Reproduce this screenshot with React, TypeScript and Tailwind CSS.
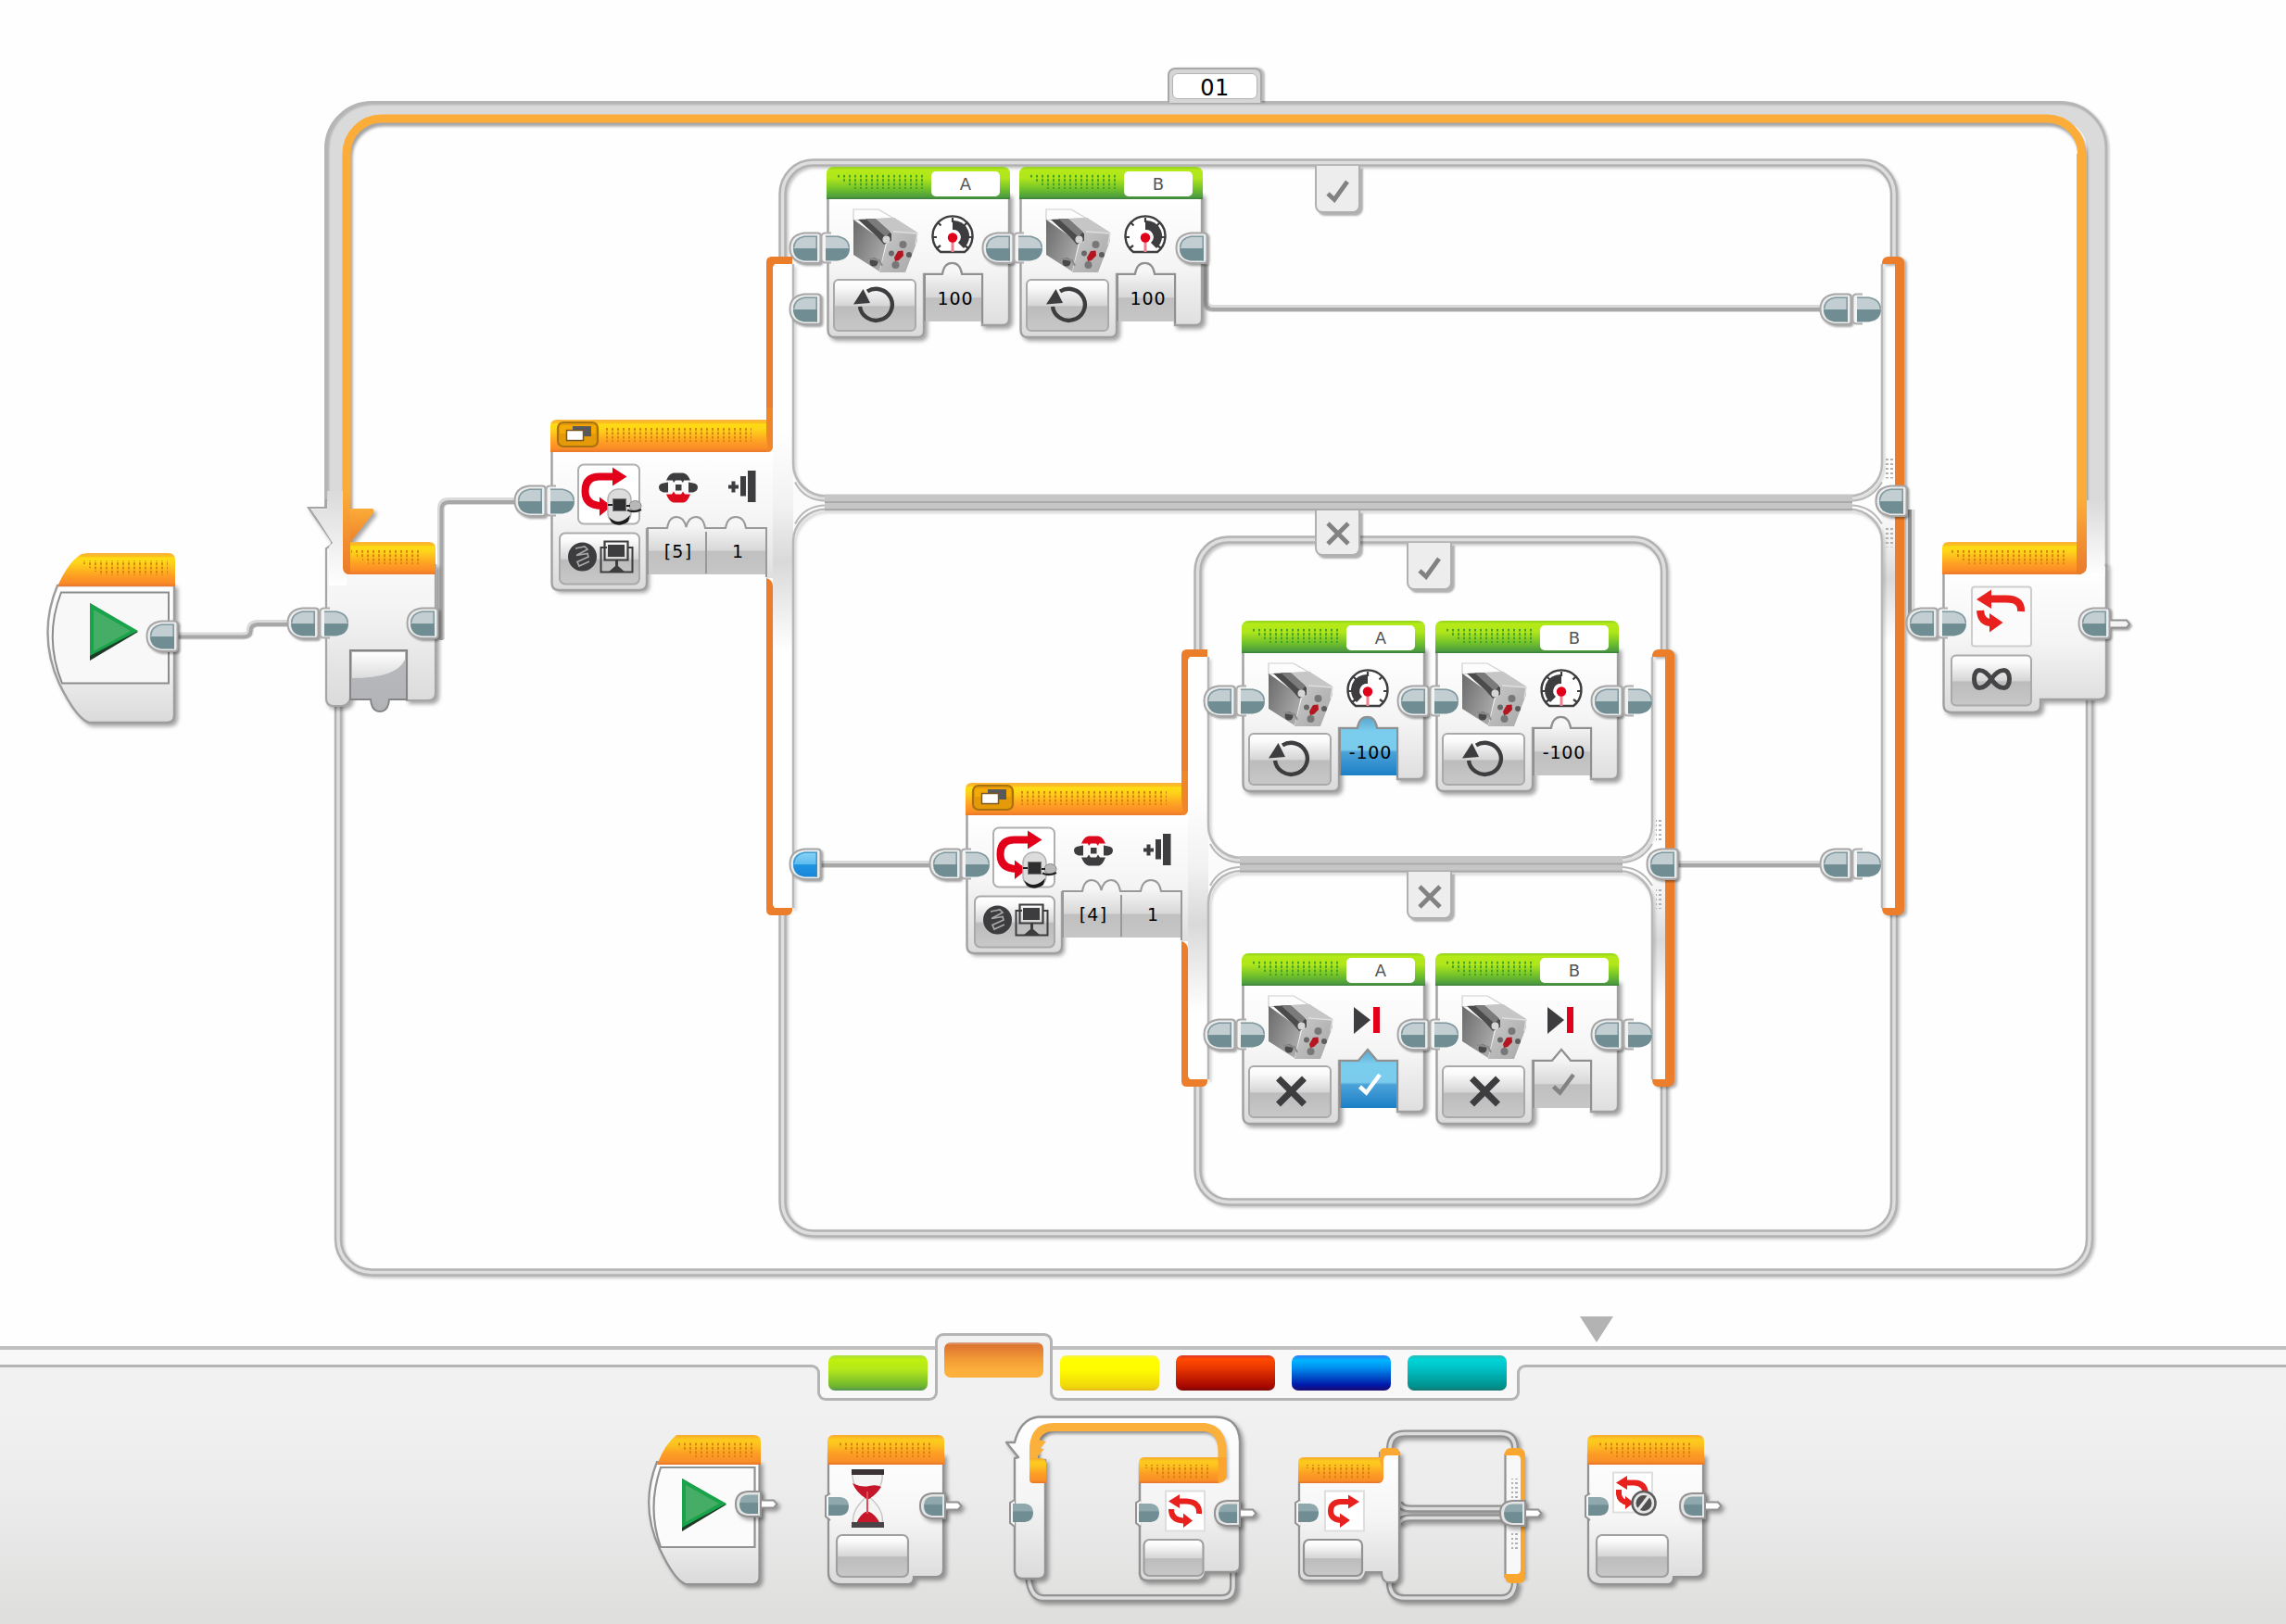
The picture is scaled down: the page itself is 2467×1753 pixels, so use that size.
import React from 'react';

type Pt = { x: number; y: number };

const SHADOW = 'drop-shadow(3px 3px 2px rgba(0,0,0,0.35))';

function Defs() {
  return (
    <svg className="absolute h-0 w-0" aria-hidden="true">
      <defs>
        <linearGradient id="orangeHead" x1="0" y1="0" x2="0" y2="1">
          <stop offset="0" stopColor="#fcb040" />
          <stop offset="0.1" stopColor="#fbc01c" />
          <stop offset="0.14" stopColor="#fddc14" />
          <stop offset="0.3" stopColor="#fdd31a" />
          <stop offset="0.7" stopColor="#fe9c24" />
          <stop offset="0.88" stopColor="#fb8d26" />
          <stop offset="1" stopColor="#e9782c" />
        </linearGradient>
        <linearGradient id="orangeTile" x1="0" y1="0" x2="0" y2="1">
          <stop offset="0" stopColor="#faa92e" />
          <stop offset="0.15" stopColor="#fccb1e" />
          <stop offset="0.3" stopColor="#fcc41f" />
          <stop offset="0.65" stopColor="#fd9c25" />
          <stop offset="0.9" stopColor="#f98f27" />
          <stop offset="1" stopColor="#e5722a" />
        </linearGradient>
        <linearGradient id="greenHead" x1="0" y1="0" x2="0" y2="1">
          <stop offset="0" stopColor="#8fd01f" />
          <stop offset="0.1" stopColor="#b4ea17" />
          <stop offset="0.35" stopColor="#b0e61b" />
          <stop offset="0.7" stopColor="#70c02c" />
          <stop offset="0.93" stopColor="#4d9c3f" />
          <stop offset="1" stopColor="#3c7c38" />
        </linearGradient>
        <linearGradient id="body" x1="0" y1="0" x2="0" y2="1">
          <stop offset="0" stopColor="#ffffff" />
          <stop offset="0.5" stopColor="#f5f5f5" />
          <stop offset="1" stopColor="#dadada" />
        </linearGradient>
        <linearGradient id="btn" x1="0" y1="0" x2="0" y2="1">
          <stop offset="0" stopColor="#ffffff" />
          <stop offset="0.15" stopColor="#fafafa" />
          <stop offset="0.5" stopColor="#d6d6d6" />
          <stop offset="0.53" stopColor="#bcbcbc" />
          <stop offset="1" stopColor="#c8c8c8" />
        </linearGradient>
        <linearGradient id="param" x1="0" y1="0" x2="0" y2="1">
          <stop offset="0.15" stopColor="#f6f6f6" />
          <stop offset="0.58" stopColor="#d8d8d8" />
          <stop offset="0.6" stopColor="#c0c0c0" />
          <stop offset="1" stopColor="#c6c6c6" />
        </linearGradient>
        <linearGradient id="paramBlue" x1="0" y1="0" x2="0" y2="1">
          <stop offset="0" stopColor="#5aa6cc" />
          <stop offset="0.25" stopColor="#7bcdee" />
          <stop offset="0.56" stopColor="#7acbec" />
          <stop offset="0.6" stopColor="#4ba2d8" />
          <stop offset="1" stopColor="#1c80c6" />
        </linearGradient>
        <linearGradient id="pill" x1="0" y1="0" x2="0" y2="1">
          <stop offset="0" stopColor="#c3ced3" />
          <stop offset="0.5" stopColor="#c3ced3" />
          <stop offset="0.52" stopColor="#6f8d92" />
          <stop offset="1" stopColor="#6f8d92" />
        </linearGradient>
        <linearGradient id="pillDark" x1="0" y1="0" x2="0" y2="1">
          <stop offset="0" stopColor="#8fa8ad" />
          <stop offset="0.38" stopColor="#8fa8ad" />
          <stop offset="0.45" stopColor="#6f8d92" />
          <stop offset="1" stopColor="#6f8d92" />
        </linearGradient>
        <linearGradient id="pillBlue" x1="0" y1="0" x2="0" y2="1">
          <stop offset="0" stopColor="#8ad4f5" />
          <stop offset="0.5" stopColor="#5cbcf0" />
          <stop offset="0.52" stopColor="#1f94e0" />
          <stop offset="1" stopColor="#1a86d8" />
        </linearGradient>
        <linearGradient id="column" x1="0" y1="0" x2="0" y2="1">
          <stop offset="0" stopColor="#ffffff" />
          <stop offset="0.34" stopColor="#f2f2f2" />
          <stop offset="0.6" stopColor="#d9d9d9" />
          <stop offset="1" stopColor="#ffffff" />
        </linearGradient>
        <linearGradient id="railFade" x1="0" y1="0" x2="0" y2="1">
          <stop offset="0" stopColor="#dadada" />
          <stop offset="1" stopColor="#ffffff" />
        </linearGradient>
        <linearGradient id="railOrange" x1="0" y1="0" x2="0" y2="1">
          <stop offset="0" stopColor="#fcac38" />
          <stop offset="1" stopColor="#ea7a2c" />
        </linearGradient>
        <linearGradient id="socket" x1="0" y1="0" x2="0" y2="1">
          <stop offset="0" stopColor="#b9babd" />
          <stop offset="1" stopColor="#b2b3b7" />
        </linearGradient>
        <linearGradient id="gloss" x1="0" y1="0" x2="0" y2="1">
          <stop offset="0" stopColor="#ffffff" />
          <stop offset="1" stopColor="#dcdcde" />
        </linearGradient>
        <linearGradient id="motorSide" x1="0" y1="0" x2="1" y2="0.6">
          <stop offset="0" stopColor="#6a6a6a" />
          <stop offset="1" stopColor="#a9a9a9" />
        </linearGradient>
        <linearGradient id="motorFront" x1="0" y1="0" x2="1" y2="1">
          <stop offset="0" stopColor="#cfcfcf" />
          <stop offset="1" stopColor="#a8a8a8" />
        </linearGradient>
        <pattern id="dotsOrange" width="6" height="4.4" patternUnits="userSpaceOnUse">
          <rect width="2" height="2.8" fill="#d8840f" />
        </pattern>
        <pattern id="dotsGreen" width="6" height="4.4" patternUnits="userSpaceOnUse">
          <rect width="2" height="2.8" fill="#45a423" />
        </pattern>
        <pattern id="dotsGray" width="5" height="5" patternUnits="userSpaceOnUse">
          <rect width="3" height="2" fill="#b2b2b2" />
        </pattern>
      </defs>
    </svg>
  );
}

function dotField(x1: number, y: number, x2: number) {
  return `M${x1} ${y}H${x2}V${y + 16}H${x1 + 18}V${y + 12}H${x1 + 12}V${y + 8}H${x1 + 6}V${y + 4}H${x1}Z`;
}

/* ---------- connectors ---------- */

function Out({ x, y, fill = 'url(#pill)', tail = false }: Pt & { fill?: string; tail?: boolean }) {
  return (
    <g transform={`translate(${x - 1} ${y - 0.5})`}>
      <g style={{ filter: 'drop-shadow(2px 2px 1px rgba(0,0,0,0.35))' }}>
        {tail && <path d="M32 14H53L56 18L53 22H32" fill="#f4f4f4" stroke="#8f8f8f" strokeWidth="2" />}
        <path d="M17 1H31Q34.500 1 34.500 4V30Q34.500 33.500 31 33.500H17Q1.500 31 1.500 17.200Q1.500 3 17 1Z" fill="#ececec" stroke="#a6a6a6" strokeWidth="2" />
      </g>
      <path d="M17 4H31V31H17Q5 29 5 17.500Q5 6 17 4Z" fill={fill} />
      <path d="M30.200 31V4.800H17Q6 7 5.600 17" fill="none" stroke={fill === 'url(#pill)' ? '#6f8d92' : '#2f8fc8'} strokeWidth="1.600" opacity="0.8" />
    </g>
  );
}

function In({ x, y }: Pt) {
  return (
    <g transform={`translate(${x - 1} ${y - 0.5})`}>
      <path d="M7 1H1Q-3.500 1 -3.500 5V29Q-3.500 33 1 33H7" fill="#f3f3f3" stroke="#adadad" strokeWidth="2" />
      <path d="M1 4H14Q27 6 27 17.500Q27 29 14 31H1Z" fill="url(#pill)" />
      <path d="M1 4.800H14Q26 7 26.300 17" fill="none" stroke="#6f8d92" strokeWidth="1.400" opacity="0.8" />
    </g>
  );
}

/* ---------- icons ---------- */

function Motor() {
  return (
    <g>
      <path d="M29 46H56L73 56L70 62L38 57L29 58Z" fill="#fdfdfd" stroke="#cfcfcf" strokeWidth="1.200" />
      <path d="M29 57L64 82L57 113L29 95Z" fill="url(#motorSide)" />
      <path d="M34 57L54 56L70 72V80L62 84L55 76Z" fill="#4b4b4b" />
      <path d="M42 56H53L69 70L64 76Z" fill="#7b7b7b" />
      <path d="M53 56L73 55L98 71V80L85 114H57L65 83L70 80V71Z" fill="url(#motorFront)" />
      <path d="M53 56L73 55L98 71L72 70Z" fill="#c6c6c6" />
      <path d="M72 70L98 72L96 84" fill="none" stroke="#dedede" strokeWidth="1.500" />
      <circle cx="64.500" cy="78.500" r="4" fill="#d6d6d6" />
      <circle cx="51" cy="103" r="4.500" fill="#4a4a4a" />
      <path d="M45 99L57 101L60 107" fill="none" stroke="#8b8b8b" strokeWidth="2" />
      <circle cx="82.500" cy="84" r="4" fill="#777" />
      <circle cx="70" cy="93.500" r="3" fill="#686868" />
      <circle cx="89" cy="95" r="3" fill="#5d5d5d" />
      <circle cx="74.500" cy="106" r="4" fill="#777" />
      <path d="M73 98L77 91L82.500 90.500L83 96L78 101L74 102Z" fill="#b31620" />
    </g>
  );
}

function Gauge({ mirrored = false }: { mirrored?: boolean }) {
  return (
    <g transform={mirrored ? 'translate(272 0) scale(-1 1)' : undefined}>
      <path d="M123 92A21.500 21.500 0 1 1 149 92Z" fill="#fff" stroke="#3d3d3f" strokeWidth="2.400" strokeLinejoin="round" />
      <path d="M136 58A17 17 0 0 1 148 88L142 82A8 8 0 0 0 136 68Z" fill="#3d3d3f" />
      <path d="M136 55V60M120 60L123.500 63.500M115 76H119M119 88L123 85M152 60L148.500 63.500M157 76H153M153 88L149 85" stroke="#3d3d3f" strokeWidth="2.200" />
      <rect x="134.500" y="77" width="3" height="15" fill="#f0808e" />
      <circle cx="136" cy="76.500" r="5.200" fill="#e2001a" />
    </g>
  );
}

function Rotate() {
  return (
    <g>
      <path d="M44 134.500A17.500 17 0 1 1 36 151" fill="none" stroke="#3d3d3f" strokeWidth="4.400" />
      <path d="M29 148.500L39.500 132L47 147Z" fill="#3d3d3f" />
    </g>
  );
}

/* ---------- motor block ---------- */

type MotorProps = Pt & { port: string; value?: string; blue?: boolean; mode: 'on' | 'off'; mirrored?: boolean };

function MotorBlock({ x, y, port, value, blue, mode, mirrored }: MotorProps) {
  const top = mode === 'on' ? 'H125Q127 104 135.500 104Q144 104 146 116H168' : 'H126L136 104L146 116H168';
  return (
    <div className="absolute h-[188px] w-[199px]" style={{ left: x, top: y }}>
      <svg className="absolute inset-0 overflow-visible" width="199" height="188" viewBox="0 0 199 188">
        <path
          d={`M1.500 30H197V164Q197 171 190 171H168V116${mode === 'on' ? 'H146Q144 104 135.500 104Q127 104 125 116' : 'H146L136 104L126 116'}H105V177Q105 184 98 184H9Q1.500 184 1.500 176Z`}
          fill="url(#body)" stroke="#a0a0a0" strokeWidth="2.400" style={{ filter: SHADOW }}
        />
        <path d={`M106 167V116${top}V167Z`} fill={blue ? 'url(#paramBlue)' : 'url(#param)'} />
        <path d={`M106 167V116${top}V169`} fill="none" stroke="#909090" strokeWidth="2" />
        <path d="M0 35V8Q0 0 8 0H190Q198 0 198 8V35Z" fill="url(#greenHead)" />
        <path d={dotField(9, 8, 107)} fill="url(#dotsGreen)" />
        <rect x="8" y="122" width="88" height="55" rx="5" fill="url(#btn)" stroke="#a9a9a9" strokeWidth="2" />
        <Motor />
        {mode === 'on' ? (
          <>
            <Gauge mirrored={mirrored} />
            <Rotate />
          </>
        ) : (
          <>
            <path d="M121 58L139 72L121 87Z" fill="#3d3d3f" />
            <rect x="142" y="58" width="7" height="28" fill="#e2001a" />
            <path d="M39.500 135L67.500 163M67.500 135L39.500 163" stroke="#3d3d3f" strokeWidth="7" />
            <path d="M127.500 144L134.500 150.500L149 131" fill="none" stroke={blue ? '#fff' : '#828282'} strokeWidth="4.500" />
          </>
        )}
      </svg>
      <div className="absolute top-[5px] left-[113px] flex h-[27px] w-[74px] items-center justify-center rounded-[5px] bg-white font-['DejaVu_Sans',sans-serif] text-[18px] leading-none text-[#555]">
        {port}
      </div>
      {value && (
        <div className="absolute top-[131px] left-[99px] flex h-[22px] w-[80px] items-center justify-center font-['DejaVu_Sans',sans-serif] text-[19px] leading-none tracking-[0.9px] text-black">
          {value}
        </div>
      )}
    </div>
  );
}

/* ---------- switch block ---------- */

function SwitchHead({ x, y, value, redTop }: Pt & { value: string; redTop?: boolean }) {
  const topFill = redTop ? '#dd0a1e' : '#3d3d3f';
  const bottomFill = redTop ? '#3d3d3f' : '#dd0a1e';
  return (
    <div className="absolute h-[188px] w-[264px]" style={{ left: x, top: y }}>
      <svg className="absolute inset-0 overflow-visible" width="264" height="188" viewBox="594 453 264 188">
        <path d="M596 560H698V629Q698 637 690 637H603Q596 637 596 629Z" fill="#e4e4e4" style={{ filter: SHADOW }} />
        <path d="M595.500 484H834V624H827V570H698V629Q698 637 690 637H603Q595.500 637 595.500 629Z" fill="url(#body)" />
        <path d="M595.500 486V629Q595.500 637 603 637H690Q698 637 698 629V570" fill="none" stroke="#a0a0a0" strokeWidth="2.400" />
        <path d="M699 620V570H720Q722 558 730 558Q738 558 740.500 569Q743 558 751 558Q759 558 761 570H783Q785 558 794 558Q803 558 805 570H827V620Z" fill="url(#param)" />
        <path d="M699 620V570H720Q722 558 730 558Q738 558 740.500 569Q743 558 751 558Q759 558 761 570H783Q785 558 794 558Q803 558 805 570H827V623M762 574V619" fill="none" stroke="#999" strokeWidth="2" />
        <path d="M594 488V460Q594 453 601 453H834V481Q834 488 827 488Z" fill="url(#orangeHead)" />
        <path d="M827 440H834V481Q834 488 829 488L827 470Z" fill="#f08628" />
        <rect x="653" y="461" width="158" height="16" fill="url(#dotsOrange)" />
        <rect x="602" y="456" width="43" height="26" rx="6" fill="#e59a0a" stroke="#a97210" strokeWidth="2.200" />
        <path d="M604 459H643V468H604Z" fill="#fdb400" opacity="0.6" />
        <rect x="618" y="460" width="20" height="11" fill="#58595b" />
        <rect x="611.500" y="464.500" width="18" height="11" fill="#fff" stroke="#7a5a20" strokeWidth="1.500" />
        <rect x="624" y="501.500" width="66" height="64" rx="6" fill="#fff" stroke="#b0b0b0" strokeWidth="2" />
        <path d="M662 514.500H647Q631.500 514.500 631.500 530T649 546" fill="none" stroke="#e2001a" strokeWidth="8" />
        <path d="M661 504.500L676.500 514.500L661 524.500ZM647 536.500L660 546.500L647 557Z" fill="#e2001a" />
        <rect x="656" y="528" width="25" height="37" rx="11" fill="#dcdcdc" stroke="#b4b4b4" strokeWidth="1.500" />
        <path d="M657 558Q668 569 680 556L678 563Q668 570 660 564Z" fill="#1c1c1c" />
        <ellipse cx="685.500" cy="546" rx="6.500" ry="5.500" fill="#b8b8b8" stroke="#8a8a8a" strokeWidth="1" />
        <path d="M677 550.500Q684 554 692 550" fill="none" stroke="#222" strokeWidth="2.200" />
        <rect x="661.500" y="538.500" width="14" height="13" fill="#2f2f31" stroke="#777" strokeWidth="1" />
        <path d="M656 545H661M676 546H680" stroke="#222" strokeWidth="2" />
        <path d="M719 518.500Q722 511 727 510.500H737Q742 511 745 518.500H738L737 521L735 518.500H729L727 521L726 518.500Z" fill={topFill} />
        <path d="M719 533.500H725L727 530.500L729 533.500H735L737 530.500L739 533.500H745Q742 541.500 738 542.500H727Q722 541.500 719 533.500Z" fill={bottomFill} />
        <path d="M721 520.500V531.500H716Q711 530 711 526T716 521.500ZM743 520.500V531.500H748Q753 530 753 526T748 521.500Z" fill="#3d3d3f" />
        <rect x="729" y="523" width="6.500" height="6.500" fill="#3d3d3f" />
        <path d="M786 525.500H797M791.500 519.500V531.500" stroke="#3d3d3f" strokeWidth="4" />
        <rect x="799" y="514" width="6" height="21.500" fill="#3d3d3f" />
        <rect x="807" y="508" width="8.500" height="34" fill="#3d3d3f" />
        <rect x="604" y="575.500" width="86" height="55" rx="6" fill="url(#btn)" stroke="#a9a9a9" strokeWidth="2" />
        <circle cx="628.500" cy="601" r="15.500" fill="#3d3d3f" />
        <path d="M621 592L631 590L634 593L622 599.500M622 599.500L634 597.500L635 601L623 606.500L625 611L636 606" fill="none" stroke="#a8a8a8" strokeWidth="1.700" />
        <path d="M655 591H648.500V617.500H682.500V591H677" fill="none" stroke="#3d3d3f" strokeWidth="2" />
        <path d="M652.500 584.500H677.500V604.500H652.500Z" fill="none" stroke="#3d3d3f" strokeWidth="2.200" />
        <rect x="656" y="588" width="18" height="13" fill="#3d3d3f" />
        <path d="M664 604H667V611L674 617H657L664 611Z" fill="#3d3d3f" />
      </svg>
      <div className="absolute top-[131px] left-[106px] flex h-[22px] w-[64px] items-center justify-center font-['DejaVu_Sans',sans-serif] text-[19px] leading-none tracking-[1.2px] text-black">
        [{value}]
      </div>
      <div className="absolute top-[131px] left-[170px] flex h-[22px] w-[64px] items-center justify-center font-['DejaVu_Sans',sans-serif] text-[19px] leading-none text-black">
        1
      </div>
    </div>
  );
}

/* ---------- frames and wires ---------- */

function Rail({ d }: { d: string }) {
  return (
    <g fill="none" style={{ filter: 'drop-shadow(2px 2px 1.5px rgba(0,0,0,0.22))' }}>
      <path d={d} stroke="#b2b2b2" strokeWidth="8.500" />
      <path d={d} stroke="#dedede" strokeWidth="3.500" />
    </g>
  );
}

function Wire({ d }: { d: string }) {
  return (
    <g fill="none">
      <path d={d} stroke="#dadada" strokeWidth="8" />
      <path d={d} stroke="#a7a7a7" strokeWidth="4" transform="translate(0.500 1)" />
    </g>
  );
}

type FrameProps = {
  l: number; r: number; t: number; b: number; barT: number; barB: number;
  mid: number; headGapT: number; headGapB: number;
};

/* One switch: outline, both orange brackets and the seam between its two branches. */
function SwitchFrame({ l, r, t, b, barT, barB, mid, headGapT, headGapB }: FrameProps) {
  const cx = l + 29;
  const rx = r - 13;
  return (
    <g>
      <Rail d={`M${l + 17.5} ${barT + 4}V${t + 34}A33 34 0 0 1 ${l + 50.5} ${t}H${r - 33}A33 34 0 0 1 ${r} ${t + 34}V${barT + 4}`} />
      <Rail d={`M${l + 17.5} ${barB - 4}V${b - 34}A33 34 0 0 0 ${l + 50.5} ${b}H${r - 33}A33 34 0 0 0 ${r} ${b - 34}V${barB - 4}`} />
      <rect x={l + 7} y={barT + 6} width="22" height={barB - barT - 12} fill="#fff" />
      <rect x={l + 7} y={mid - 80} width="22" height="240" fill="url(#column)" />
      <rect x={rx} y={barT + 6} width="15" height={barB - barT - 12} fill="#fff" />
      <rect x={rx} y={mid - 20} width="15" height="170" fill="url(#column)" />
      <path d={`M${cx} ${mid - 24}Q${cx + 8} ${mid - 3} ${cx + 34} ${mid - 3}V${mid + 3}Q${cx + 8} ${mid + 3} ${cx} ${mid + 24}Z`} fill="#fbfbfb" />
      <g fill="none" style={{ filter: 'drop-shadow(2px 3px 1.5px rgba(0,0,0,0.2))' }}>
        <path d={`M${cx} ${barT + 8}V${mid - 42}A36 35 0 0 0 ${cx + 36} ${mid - 7}H${rx - 36}A36 35 0 0 0 ${rx} ${mid - 42}V${barT + 8}`} stroke="#b8b8b8" strokeWidth="2.500" />
        <path d={`M${cx} ${barB - 8}V${mid + 42}A36 35 0 0 1 ${cx + 36} ${mid + 7}H${rx - 36}A36 35 0 0 1 ${rx} ${mid + 42}V${barB - 8}`} stroke="#b8b8b8" strokeWidth="2.500" />
      </g>
      <path d={`M${cx + 2} ${mid - 22}Q${cx + 12} ${mid - 2} ${cx + 36} ${mid - 2}H${rx - 34}Q${rx - 12} ${mid - 2} ${rx} ${mid - 22}`} fill="none" stroke="#b8b8b8" strokeWidth="2" />
      <path d={`M${cx + 2} ${mid + 23}Q${cx + 12} ${mid + 3} ${cx + 36} ${mid + 3}H${rx - 34}Q${rx - 12} ${mid + 3} ${rx} ${mid + 23}`} fill="none" stroke="#b8b8b8" strokeWidth="2" />
      <rect x={cx + 34} y={mid - 9} width={rx - cx - 66} height="18" fill="#c6c6c6" />
      <rect x={cx + 34} y={mid - 1.5} width={rx - cx - 66} height="2" fill="#aaa" />
      <rect x={cx + 34} y={mid + 6.5} width={rx - cx - 66} height="2" fill="#aaa" />
      <path d={`M${rx + 4} ${mid - 48}H${rx + 12}V${mid - 26}H${rx + 4}ZM${rx + 4} ${mid + 27}H${rx + 12}V${mid + 48}H${rx + 4}Z`} fill="url(#dotsGray)" />
      <g fill="#ec7d2b">
        <path d={`M${l} ${headGapT}V${barT + 6}Q${l} ${barT} ${l + 6} ${barT}H${l + 28}V${barT + 8}H${l + 9}L${l + 7} ${barT + 11}V${headGapT}Z`} />
        <path d={`M${l} ${headGapB}Q${l + 7} ${headGapB + 2} ${l + 7} ${headGapB + 9}V${barB - 11}L${l + 9} ${barB - 8}H${l + 28}V${barB - 5}Q${l + 27} ${barB} ${l + 22} ${barB}H${l + 6}Q${l} ${barB} ${l} ${barB - 6}Z`} />
        <path d={`M${rx} ${barT + 8}Q${rx} ${barT} ${rx + 7} ${barT}H${rx + 17}Q${rx + 24} ${barT} ${rx + 24} ${barT + 7}V${barB - 7}Q${rx + 24} ${barB} ${rx + 17} ${barB}H${rx + 7}Q${rx} ${barB} ${rx} ${barB - 8}H${rx + 14}V${barT + 8}Z`} style={{ filter: 'drop-shadow(3px 2px 1.500px rgba(0,0,0,0.3))' }} />
      </g>
    </g>
  );
}

function CaseTab({ x, y, h, kind }: Pt & { h: number; kind: 'check' | 'cross' }) {
  return (
    <div
      className="absolute flex w-[49px] items-end justify-center rounded-b-[8px] border-2 border-t-0 border-[#b0b0b0] bg-[#ededed] pb-[9px] shadow-[3px_3px_2px_rgba(0,0,0,0.3)]"
      style={{ left: x, top: y, height: h }}
    >
      <svg width="26" height="26" viewBox="0 0 26 26">
        <path
          d={kind === 'check' ? 'M2 16L9 22.500L23 3' : 'M2 2L24 24M24 2L2 24'}
          fill="none" stroke="#828282" strokeWidth="4.800"
        />
      </svg>
    </div>
  );
}

function Wires() {
  return (
    <svg className="absolute inset-0 overflow-visible" width="2467" height="1437" viewBox="0 0 2467 1437">
      <Rail d="M365 755V1338A36 35.500 0 0 0 401 1373.500H2219A36 35.500 0 0 0 2255 1338V750" />
      <path
        d="M361.500 548V160A41 40 0 0 1 402 120H2222A41 40 0 0 1 2262.500 160V600"
        fill="none" stroke="#dadada" strokeWidth="21"
      />
      <path
        d="M351.500 548V160A50 49.500 0 0 1 401.500 110.500H2223A50 49.500 0 0 1 2273 160V612"
        fill="none" stroke="#b5b5b5" strokeWidth="3" style={{ filter: 'drop-shadow(2px 1px 1px rgba(0,0,0,0.2))' }}
      />
      <path
        d="M374 548V166A38 38 0 0 1 412 128H2209A37.500 38 0 0 1 2246.500 166V560"
        fill="none" stroke="#fcac38" strokeWidth="9" style={{ filter: 'drop-shadow(2px 4px 1.500px rgba(0,0,0,0.35))' }}
      />
      <path d="M2246.500 166V560" stroke="#fcac38" strokeWidth="11" />
      <Wire d="M190 686.500H262Q270 686.500 270 680T278 673H312" />
      <Wire d="M476 690V549Q476 541 484 541H556" />
      <Wire d="M1301 285V325Q1301 333 1309 333H1966" />
      <Wire d="M886 933H1006" />
      <Wire d="M1810 933H1966" />
      <SwitchFrame l={827} r={2044} t={175.5} b={1331.5} barT={277} barB={988} mid={542.5} headGapT={460} headGapB={624} />
      <SwitchFrame l={1275} r={1796} t={582.5} b={1297.5} barT={701} barB={1173} mid={933} headGapT={852} headGapB={1016} />
      <path d="M2062 550V668" stroke="#dadada" strokeWidth="9" />
      <path d="M2061 550V668" stroke="#8f8f8f" strokeWidth="4" />
    </svg>
  );
}

function Pills() {
  return (
    <svg className="pointer-events-none absolute inset-0" width="2467" height="1437" viewBox="0 0 2467 1437">
      <Out x={158} y={670} />
      <Out x={310} y={656} />
      <In x={350} y={656} />
      <Out x={439} y={656} />
      <Out x={555} y={524} />
      <In x={594} y={524} />
      <Out x={852} y={251} />
      <In x={891} y={251} />
      <Out x={852} y={317} />
      <Out x={1060} y={251} />
      <In x={1099} y={251} />
      <Out x={1269} y={251} />
      <Out x={1964} y={317} />
      <In x={2004} y={317} />
      <Out x={2024} y={524} />
      <Out x={852} y={916} fill="url(#pillBlue)" />
      <Out x={1003} y={916} />
      <In x={1042} y={916} />
      <Out x={1964} y={916} />
      <In x={2004} y={916} />
      <Out x={1777} y={916} />
      {[740, 1100].map((y) => (
        <g key={y}>
          <Out x={1299} y={y} />
          <In x={1339} y={y} />
          <Out x={1508} y={y} />
          <In x={1548} y={y} />
          <Out x={1717} y={y} />
          <In x={1757} y={y} />
        </g>
      ))}
      <Out x={2057} y={656} />
      <In x={2096} y={656} />
      <Out x={2243} y={656} tail />
    </svg>
  );
}

/* ---------- start, loop head, loop end ---------- */

function StartBlock() {
  return (
    <svg className="absolute top-[595px] left-[48px] overflow-visible" width="146" height="190" viewBox="48 595 146 190">
      <path d="M62 632H188V772Q188 780 180 780H96Q82 775 64 738Q40 685 62 632Z" fill="url(#body)" stroke="#9d9d9d" strokeWidth="2.400" style={{ filter: SHADOW }} />
      <path d="M66 639.500H182V737.500H67Q47 688 66 639.500Z" fill="#f8f8f8" stroke="#8c8c8c" strokeWidth="2" />
      <path d="M62 633Q74 606 88 598L94 597H182Q189 597 189 605V633Z" fill="url(#orangeHead)" />
      <path d={dotField(89, 605, 181)} fill="url(#dotsOrange)" />
      <path d="M97 651L149 682L97 713Z" fill="#1d3a26" />
      <path d="M97 651L149 681L97 708Z" fill="#19a34a" />
      <path d="M101 658L141 681L101 703Z" fill="#45ad66" />
    </svg>
  );
}

function LoopHead() {
  return (
    <svg className="absolute top-[540px] left-[326px] overflow-visible" width="150" height="232" viewBox="326 540 150 232">
      <path d="M352 592V754Q352 762 360 762H368Q376 762 378 754V702H439V756H462Q470 756 470 748V610H372V540H352V548H333L358 584V588Z" fill="url(#body)" stroke="#a5a5a5" strokeWidth="2.200" style={{ filter: SHADOW }} />
      <path d="M353.200 530H374V632H355V590L359 586L336 549.500H353.200Z" fill="url(#railFade)" />
      <path d="M371 549H402Q405 551 402 555L380 583V592H371Z" fill="url(#railOrange)" style={{ filter: 'drop-shadow(3px 3px 2px rgba(0,0,0,0.35))' }} />
      <path d="M376 585H463Q470 585 470 592V620H376Z" fill="url(#orangeHead)" />
      <path d="M370 530H378V620H375Q370 618 370 613Z" fill="url(#railOrange)" />
      <path d={dotField(379, 593, 454)} fill="url(#dotsOrange)" />
      <path d="M378 702H439V755H420Q419 768 410 768T400 755H378Z" fill="url(#socket)" stroke="#858585" strokeWidth="2" />
      <path d="M380 704H437V712Q428 732 380 732Z" fill="url(#gloss)" />
    </svg>
  );
}

function LoopEnd() {
  return (
    <svg className="absolute top-[540px] left-[2094px] overflow-visible" width="182" height="232" viewBox="2094 540 182 232">
      <path d="M2097.500 610H2273V747Q2273 755 2265 755H2202V761Q2202 769 2194 769H2106Q2097.500 769 2097.500 761Z" fill="url(#body)" stroke="#a0a0a0" strokeWidth="2.400" style={{ filter: SHADOW }} />
      <rect x="2252" y="540" width="19.500" height="82" fill="url(#railFade)" />
      <path d="M2096 620V592Q2096 585 2103 585H2246V620Z" fill="url(#orangeHead)" />
      <path d="M2241 540H2252V612Q2251 620 2243 620H2241Z" fill="url(#railOrange)" />
      <path d={dotField(2105, 593, 2228)} fill="url(#dotsOrange)" />
      <rect x="2128" y="633.500" width="64" height="64" rx="3" fill="#fbfbfb" stroke="#cdcdcd" strokeWidth="2" />
      <path d="M2181 660Q2182 646.500 2165 646.500H2148M2137 659Q2138 672 2149 672" fill="none" stroke="#e8201e" strokeWidth="8" />
      <path d="M2133 647L2149 636.500V657ZM2161.500 672L2147 662V682.500Z" fill="#e8201e" />
      <rect x="2106" y="707.500" width="86" height="54" rx="5" fill="url(#btn)" stroke="#a9a9a9" strokeWidth="2" />
      <path d="M2149 733C2141 721 2130.500 720 2130.500 733S2141 745 2149 733S2168.500 720 2168.500 733S2157 745 2149 733Z" fill="none" stroke="#454547" strokeWidth="5" />
    </svg>
  );
}

/* ---------- palette tiles ---------- */

function TileOut({ x, y }: Pt) {
  return (
    <g transform={`translate(${x} ${y})`}>
      <g style={{ filter: SHADOW }}>
        <path d="M27 10.500H42L45.500 14.500L42 18.500H27" fill="#fff" stroke="#929292" strokeWidth="2" />
        <path d="M14 1H28V28H14Q1 27 1 14.500T14 1Z" fill="#e3e3e3" stroke="#929292" strokeWidth="2" />
      </g>
      <path d="M14 4.500H25V25H14Q5 24 5 14.500T14 4.500Z" fill="url(#pillDark)" />
    </g>
  );
}

function TileIn({ x, y }: Pt) {
  return (
    <g transform={`translate(${x} ${y})`}>
      <path d="M3 -3L-2 0V22L3 26" fill="#f5f5f5" stroke="#929292" strokeWidth="2" />
      <path d="M1 1H14Q23 2 23 11T14 21H1Z" fill="url(#pillDark)" />
    </g>
  );
}

function StartTile() {
  return (
    <svg className="overflow-visible" width="142" height="206" viewBox="700 1527 142 206">
      <path d="M709 1578H819.500V1702Q819.500 1710 812 1710H740Q728 1706 712 1672Q690 1626 709 1578Z" fill="url(#body)" stroke="#929292" strokeWidth="2.200" style={{ filter: SHADOW }} />
      <path d="M713 1584H814.500V1670H713Q698 1628 713 1584Z" fill="#fbfbfb" stroke="#929292" strokeWidth="2.200" />
      <path d="M709 1581Q718 1558 730 1549H813Q821 1549 821 1556V1581Z" fill="url(#orangeTile)" />
      <path d={dotField(732, 1557, 812)} fill="url(#dotsOrange)" />
      <path d="M736 1596L784 1624L736 1653Z" fill="#1d3a26" />
      <path d="M736 1596L784 1623L736 1649Z" fill="#19a34a" />
      <path d="M740 1603L776 1623L740 1643Z" fill="#45ad66" />
      <TileOut x={793} y={1609} />
    </svg>
  );
}

function BlockShell({ children }: { children: React.ReactNode }) {
  return (
    <svg className="overflow-visible" width="151" height="206" viewBox="888 1527 151 206">
      <path d="M894 1570H1018V1694Q1018 1702 1010 1702H986V1704Q985 1710 980 1710H906Q894 1709 894 1698Z" fill="url(#body)" stroke="#929292" strokeWidth="2.200" style={{ filter: SHADOW }} />
      <path d="M893 1581V1556Q893 1549 900 1549H1012Q1019 1549 1019 1556V1581Z" fill="url(#orangeTile)" />
      <path d={dotField(905, 1557, 1007)} fill="url(#dotsOrange)" />
      <rect x="903" y="1657" width="77" height="45" rx="6" fill="url(#btn)" stroke="#a0a0a0" strokeWidth="2.200" />
      {children}
      <TileIn x={893} y={1615} />
      <TileOut x={992} y={1611} />
    </svg>
  );
}

function WaitTile() {
  return (
    <BlockShell>
      <path d="M920 1590H952Q954 1606 938 1616Q955 1630 952 1646H921Q918 1630 935 1616Q919 1606 920 1590Z" fill="#f4f4f4" stroke="#c8c8c8" strokeWidth="1.500" />
      <path d="M920 1601Q930 1606 938 1604Q946 1602 951 1605Q946 1613 938 1618H935Q924 1611 920 1601ZM924 1645Q928 1634 936 1631Q945 1634 950 1645Z" fill="#c5162a" />
      <path d="M936 1610V1634" stroke="#e04a5a" strokeWidth="2" />
      <rect x="919" y="1586" width="35" height="6" fill="#3b3236" />
      <rect x="919" y="1643" width="35" height="6" fill="#4a4347" />
    </BlockShell>
  );
}

function StopTile() {
  return (
    <BlockShell>
      <rect x="921" y="1589.500" width="42" height="43" fill="#fff" stroke="#dedede" strokeWidth="2" />
      <path d="M956 1612Q955 1601 944 1600.500H934M927 1608V1613Q928 1621 937 1622" fill="none" stroke="#e8201e" strokeWidth="6" />
      <path d="M924 1600.500L936 1593V1608ZM934 1615L943 1622L934 1629Z" fill="#e8201e" />
      <circle cx="954" cy="1622.500" r="12.500" fill="#e6e6e6" stroke="#5d5d5d" strokeWidth="2.600" />
      <circle cx="954" cy="1622.500" r="8.500" fill="#505050" />
      <path d="M960 1614L947 1631" stroke="#e6e6e6" strokeWidth="3.200" />
    </BlockShell>
  );
}

function LoopTile() {
  return (
    <svg className="overflow-visible" width="271" height="206" viewBox="1085 1527 271 206">
      <g fill="none" style={{ filter: SHADOW }}>
        <path d="M1110 1702Q1112 1725 1126 1725H1318Q1331 1725 1331 1712V1694" stroke="#929292" strokeWidth="8" />
        <path d="M1110 1702Q1112 1725 1126 1725H1318Q1331 1725 1331 1712V1694" stroke="#dcdcdc" strokeWidth="3.500" />
      </g>
      <path
        d="M1095 1574V1696Q1096 1704 1103 1704H1121Q1128 1703 1128 1697V1576H1118V1560Q1120 1543 1136 1541H1302Q1318 1545 1318 1580H1230V1699Q1231 1706 1238 1706H1293Q1300 1705 1301 1697H1330Q1338 1697 1338 1690V1556Q1337 1530 1312 1529.500H1120Q1101 1532 1095 1557H1086L1099 1573Z"
        fill="url(#body)" stroke="#929292" strokeWidth="2.400" strokeLinejoin="round" style={{ filter: SHADOW }}
      />
      <path d="M1115.500 1580V1562Q1117 1540.500 1137 1540.500H1300Q1319 1543 1319 1567V1594" fill="none" stroke="#fbb03b" strokeWidth="9" style={{ filter: 'drop-shadow(2px 3px 1.500px rgba(0,0,0,0.25))' }} />
      <path d="M1116 1553L1129 1556L1122 1564H1127L1117 1575Z" fill="#fbb03b" />
      <path d="M1111 1574H1123Q1129 1574 1129 1580V1601H1115Q1111 1601 1111 1597Z" fill="url(#orangeTile)" />
      <path d="M1229 1601V1579Q1229 1573 1235 1573H1316V1601Z" fill="url(#orangeTile)" />
      <path d="M1314.500 1573H1323.500V1594Q1322 1601 1314.500 1601Z" fill="#fba52f" />
      <path d={dotField(1235, 1581, 1308)} fill="url(#dotsOrange)" />
      <rect x="1258" y="1609.500" width="42" height="43" fill="#fff" stroke="#dedede" strokeWidth="2" />
      <path d="M1294 1634Q1295 1621 1280 1620.500H1271M1264 1629Q1264 1641 1277 1641.500" fill="none" stroke="#e8201e" strokeWidth="6" />
      <path d="M1261 1620.500L1273 1613V1628ZM1287 1641.500L1277 1633.500V1649Z" fill="#e8201e" />
      <rect x="1234.500" y="1662" width="64" height="39" rx="6" fill="url(#btn)" stroke="#a0a0a0" strokeWidth="2.200" />
      <TileIn x={1092} y={1622} />
      <TileIn x={1228} y={1622} />
      <TileOut x={1310} y={1619} />
    </svg>
  );
}

function SwitchTile() {
  return (
    <svg className="overflow-visible" width="268" height="206" viewBox="1396 1527 268 206">
      <g fill="none" style={{ filter: SHADOW }}>
        {['#929292', '#dcdcdc'].map((c, i) => (
          <g key={c} stroke={c} strokeWidth={i === 0 ? 8 : 3.5}>
            <path d="M1500 1566V1562Q1501 1547.500 1516 1547.500H1620Q1635 1548 1635 1564" />
            <path d="M1500 1704V1711Q1501 1725 1516 1725H1620Q1635 1725 1635 1706" />
            <path d="M1510 1622Q1512 1628.500 1522 1628.500H1624M1510 1645Q1512 1638.500 1522 1638.500H1624" />
          </g>
        ))}
      </g>
      <path d="M1402 1598H1489V1568H1510V1702Q1509 1708 1504 1708H1497Q1491 1706 1491 1697H1474Q1472 1706 1465 1706H1410Q1402 1706 1402 1698Z" fill="url(#body)" stroke="#929292" strokeWidth="2.200" style={{ filter: SHADOW }} />
      <path d="M1401 1601V1579Q1401 1573 1407 1573H1493V1596Q1492 1601 1487 1601Z" fill="url(#orangeTile)" />
      <path d="M1489 1576V1568Q1489 1563 1495 1563H1506Q1511 1564 1511 1571H1497Q1493 1571 1493 1577V1594Z" fill="#fba932" />
      <path d={dotField(1408, 1581, 1481)} fill="url(#dotsOrange)" />
      <rect x="1430" y="1609.500" width="42" height="43" fill="#fff" stroke="#dedede" strokeWidth="2" />
      <path d="M1456 1621H1446Q1436 1622 1436 1631T1447 1641" fill="none" stroke="#e8201e" strokeWidth="6" />
      <path d="M1455 1613.500L1467 1621L1455 1628.500ZM1446 1633.500L1457 1641L1446 1649Z" fill="#e8201e" />
      <rect x="1407" y="1662" width="63" height="39" rx="6" fill="url(#btn)" stroke="#929292" strokeWidth="2.200" />
      <path d="M1624.500 1570H1643V1702H1624.500Z" fill="#f8f8f8" stroke="#929292" strokeWidth="2.200" style={{ filter: SHADOW }} />
      <path d="M1623.500 1571Q1624 1563 1631 1563H1639Q1646 1564 1646 1571V1701Q1646 1709 1639 1709H1631Q1624 1709 1623.500 1699H1637Q1641 1699 1641 1694V1576Q1641 1571 1637 1571Z" fill="#fba62f" />
      <path d="M1631 1596H1640V1618H1631ZM1631 1652H1640V1673H1631Z" fill="url(#dotsGray)" />
      <TileIn x={1400} y={1622} />
      <TileOut x={1618} y={1619} />
    </svg>
  );
}

const swatch = 'relative h-[38px] w-[107px] rounded-[7px]';

function Palette() {
  return (
    <div className="flex h-[314px] w-full flex-col">
      <div className="flex h-[76px] w-full items-start bg-[linear-gradient(transparent_18px,#f1f1f1_18px)]">
        <div className="mt-[14px] flex h-[62px] w-[885px] flex-col border-t-[4px] border-[#c0c0c0] bg-[#f8f8f8]">
          <div className="mt-[16px] h-[12px] w-full rounded-tr-[9px] border-t-[3px] border-r-[3px] border-[#b4b4b4] bg-[#f1f1f1]" />
          <div className="w-full flex-1 bg-[#f1f1f1]" />
        </div>
        <div className="mt-[14px] flex h-[62px] w-[124px] flex-col">
          <div className="h-[30px] w-full border-t-[4px] border-[#c0c0c0] bg-[#f8f8f8]" />
          <div className="-mx-[3px] flex h-[29px] justify-center rounded-b-[9px] border-x-[3px] border-b-[3px] border-[#b4b4b4] bg-[#f8f8f8]">
            <div className={`${swatch} -mt-[20px] bg-[linear-gradient(#a9dd3c,#bff00f_12%,#b4e81a_40%,#6fb530_88%,#519450)]`} />
          </div>
        </div>
        <div className="flex h-[76px] w-[127px] flex-col">
          <div className="flex h-[62px] w-full justify-center rounded-t-[9px] border-x-[3px] border-t-[3px] border-[#b4b4b4] bg-[#f1f1f1] pt-[7px]">
            <div className={`${swatch} bg-[linear-gradient(#dca98c,#dd7430_8%,#f39c35_50%,#fbaf3c_80%,#fbb13d)]`} />
          </div>
        </div>
        <div className="mt-[14px] flex h-[62px] w-[501px] flex-col">
          <div className="h-[30px] w-full border-t-[4px] border-[#c0c0c0] bg-[#f8f8f8]" />
          <div className="-mr-[3px] -ml-[3px] flex h-[29px] gap-[18px] rounded-b-[9px] border-x-[3px] border-b-[3px] border-[#b4b4b4] bg-[#f8f8f8] pl-[8px]">
            <div className={`${swatch} -mt-[20px] bg-[linear-gradient(#f6f05a,#ffff00_10%,#fffc00_40%,#efd60c_90%,#e6b818)]`} />
            <div className={`${swatch} -mt-[20px] bg-[linear-gradient(#d8362c,#ff4a00_10%,#f03c00_30%,#a80800_88%,#7c0808)]`} />
            <div className={`${swatch} -mt-[20px] bg-[linear-gradient(#2f7cf0,#00b4ff_14%,#0090f0_35%,#0018a8_85%,#1c0a70)]`} />
            <div className={`${swatch} -mt-[20px] bg-[linear-gradient(#28bcb8,#00d4d6_12%,#00c4c8_35%,#00928e_88%,#147874)]`} />
          </div>
        </div>
        <div className="mt-[14px] flex h-[32px] flex-1 flex-col border-t-[4px] border-[#c0c0c0] bg-[#f8f8f8]">
          <div className="mt-[16px] h-[12px] w-full rounded-tl-[9px] border-t-[3px] border-l-[3px] border-[#b4b4b4] bg-[#f1f1f1]" />
        </div>
      </div>
      <div className="flex h-[238px] w-full items-start bg-[linear-gradient(#f1f1f1,#ececec_40%,#dededd)] pt-[12px] pl-[700px]">
        <StartTile />
        <div className="w-[46px]" />
        <WaitTile />
        <div className="w-[46px]" />
        <LoopTile />
        <div className="w-[40px]" />
        <SwitchTile />
        <div className="w-[44px]" />
        <StopTile />
      </div>
    </div>
  );
}

export default function App() {
  return (
    <div className="flex h-[1753px] w-full flex-col overflow-hidden bg-[#fefefe]">
      <Defs />
      <div className="relative h-[1439px] w-full">
        <Wires />
        <div className="absolute top-[73px] left-[1260px] flex h-[38px] w-[102px] items-start justify-center rounded-t-[8px] border-[2px] border-b-0 border-[#a8a8a8] bg-[#d6d6d6] pt-[4px] shadow-[3px_0_2px_rgba(0,0,0,0.25)]">
          <div className="flex h-[28px] w-[92px] items-center justify-center rounded-[6px] border border-[#b4b4b4] bg-white pt-[3px] font-['DejaVu_Sans',sans-serif] text-[24px] leading-none tracking-[0.5px] text-black">
            01
          </div>
        </div>
        <CaseTab x={1419} y={179} h={51} kind="check" />
        <CaseTab x={1419} y={551} h={49} kind="cross" />
        <CaseTab x={1518} y={586} h={51} kind="check" />
        <CaseTab x={1518} y={941} h={51} kind="cross" />
        <StartBlock />
        <LoopHead />
        <SwitchHead x={594} y={453} value="5" />
        <MotorBlock x={892} y={180} port="A" value="100" mode="on" />
        <MotorBlock x={1100} y={180} port="B" value="100" mode="on" />
        <SwitchHead x={1042} y={845} value="4" redTop />
        <MotorBlock x={1340} y={670} port="A" value="-100" mode="on" blue mirrored />
        <MotorBlock x={1549} y={670} port="B" value="-100" mode="on" mirrored />
        <MotorBlock x={1340} y={1029} port="A" mode="off" blue />
        <MotorBlock x={1549} y={1029} port="B" mode="off" />
        <LoopEnd />
        <Pills />
        <svg className="absolute top-[1421px] left-[1705px] overflow-visible" width="36" height="28" viewBox="0 0 36 28">
          <path d="M0 0H36L18 28Z" fill="#b3b3b3" />
        </svg>
      </div>
      <Palette />
    </div>
  );
}
